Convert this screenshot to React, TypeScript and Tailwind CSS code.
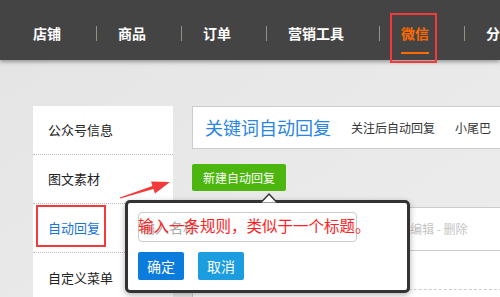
import React from "react";

const NAV = ["店铺", "商品", "订单", "营销工具", "微信", "分销"];
const SIDE = ["公众号信息", "图文素材", "自动回复", "自定义菜单"];

export default function App() {
  return (
    <div
      className="relative w-[500px] h-[297px] overflow-hidden bg-gradient-to-br from-[#e4e4e4] to-[#ededed]"
      style={{ fontFamily: '"Noto Sans CJK SC", "Noto Sans", sans-serif' }}
    >
      {/* top nav */}
      <div className="relative h-[60px] bg-[#444444] shadow-[0_2px_4px_rgba(0,0,0,0.35)] flex items-start pt-[24px] pl-[33px] whitespace-nowrap">
        {NAV.map((n, i) => (
          <div key={n} className="flex items-center">
            <span
              className={`relative text-[14px] leading-[18px] font-bold ${
                n === "微信" ? "text-[#ff6a00]" : "text-white"
              }`}
            >
              {n}
              {n === "微信" && (
                <span className="absolute left-0 right-0 top-[28px] h-[2px] bg-[#ff6a00]" />
              )}
            </span>
            {i < NAV.length - 1 && (
              <span className="ml-[35px] mr-[21px] w-px h-[15px] bg-[#9a8f85]" />
            )}
          </div>
        ))}
      </div>

      {/* body */}
      <div className="flex pt-[46px] pl-[33px] gap-[19px]">
        {/* sidebar */}
        <div className="w-[140px] shrink-0 bg-white">
          {SIDE.map((s, i) => (
            <div
              key={s}
              className={`h-[49px] flex items-center pl-[15px] text-[13px] ${
                i < SIDE.length - 1 ? "border-b border-dotted border-[#bbbbbb]" : ""
              } ${s === "自动回复" ? "text-[#1a74d6]" : "text-[#222222]"}`}
            >
              {s}
            </div>
          ))}
        </div>

        {/* main */}
        <div className="w-[340px] shrink-0">
          <div className="h-[43px] bg-white border border-[#cccccc] flex items-center pl-[12px] gap-[20px] whitespace-nowrap">
            <span className="text-[18px] text-[#2a86e0]">关键词自动回复</span>
            <span className="text-[12px] text-[#333333]">关注后自动回复</span>
            <span className="text-[12px] text-[#333333]">小尾巴</span>
          </div>
          <button className="mt-[15px] h-[27px] w-[94px] rounded-[2px] bg-[#4cb60e] text-white text-[12px]">
            新建自动回复
          </button>
          <div className="mt-[16px] bg-white border-t border-l border-[#cccccc]">
            <div className="h-[43px] border-b border-[#cccccc] flex items-center pl-[217px] text-[12px] text-[#c4c4c4]">
              编辑 - 删除
            </div>
            <div className="h-[39px] border-b border-dashed border-[#cccccc]" />
            <div className="h-[20px]" />
          </div>
        </div>
      </div>

      {/* popover */}
      <div className="absolute left-[125px] top-[200px] w-[285px] h-[93px] bg-white border-[3px] border-[#333333] rounded-[5px] shadow-[0_2px_6px_rgba(0,0,0,0.3)] pl-[10px] pt-[9px]">
        <div className="w-[219px] h-[30px] border border-[#cccccc] rounded-[4px] flex items-center pl-[2px] text-[14px] text-[#aaaaaa]">
          输入名称
        </div>
        <div className="flex gap-[14px] mt-[10px]">
          <button className="w-[46px] h-[28px] rounded-[2px] bg-[#0b7cdb] text-white text-[14px]">
            确定
          </button>
          <button className="w-[46px] h-[28px] rounded-[2px] bg-[#1b9de0] text-white text-[14px]">
            取消
          </button>
        </div>
      </div>
      <svg className="absolute left-[260px] top-[192px]" width="18" height="11" viewBox="0 0 18 11">
        <path d="M1 10.5 L9 2 L17 10.5" fill="white" stroke="#333333" strokeWidth="1.5" />
      </svg>

      {/* annotations */}
      <div className="absolute left-[138px] top-[214px] text-[15.5px] leading-[22px] text-[#ff2222] whitespace-nowrap">
        输入一条规则，类似于一个标题。
      </div>
      <div className="absolute left-[390px] top-[13px] w-[47px] h-[50px] border-2 border-[#f23a3a]" />
      <div className="absolute left-[36px] top-[205px] w-[70px] h-[42px] border-2 border-[#f23a3a]" />
      <svg className="absolute left-0 top-0" width="500" height="297" viewBox="0 0 500 297">
        <polygon
          points="119.8,197.5 152.4,186.1 151.1,181.4 170,182 155,193.6 153.4,188.9 120.2,198.5"
          fill="#f23a3a"
        />
      </svg>
    </div>
  );
}
